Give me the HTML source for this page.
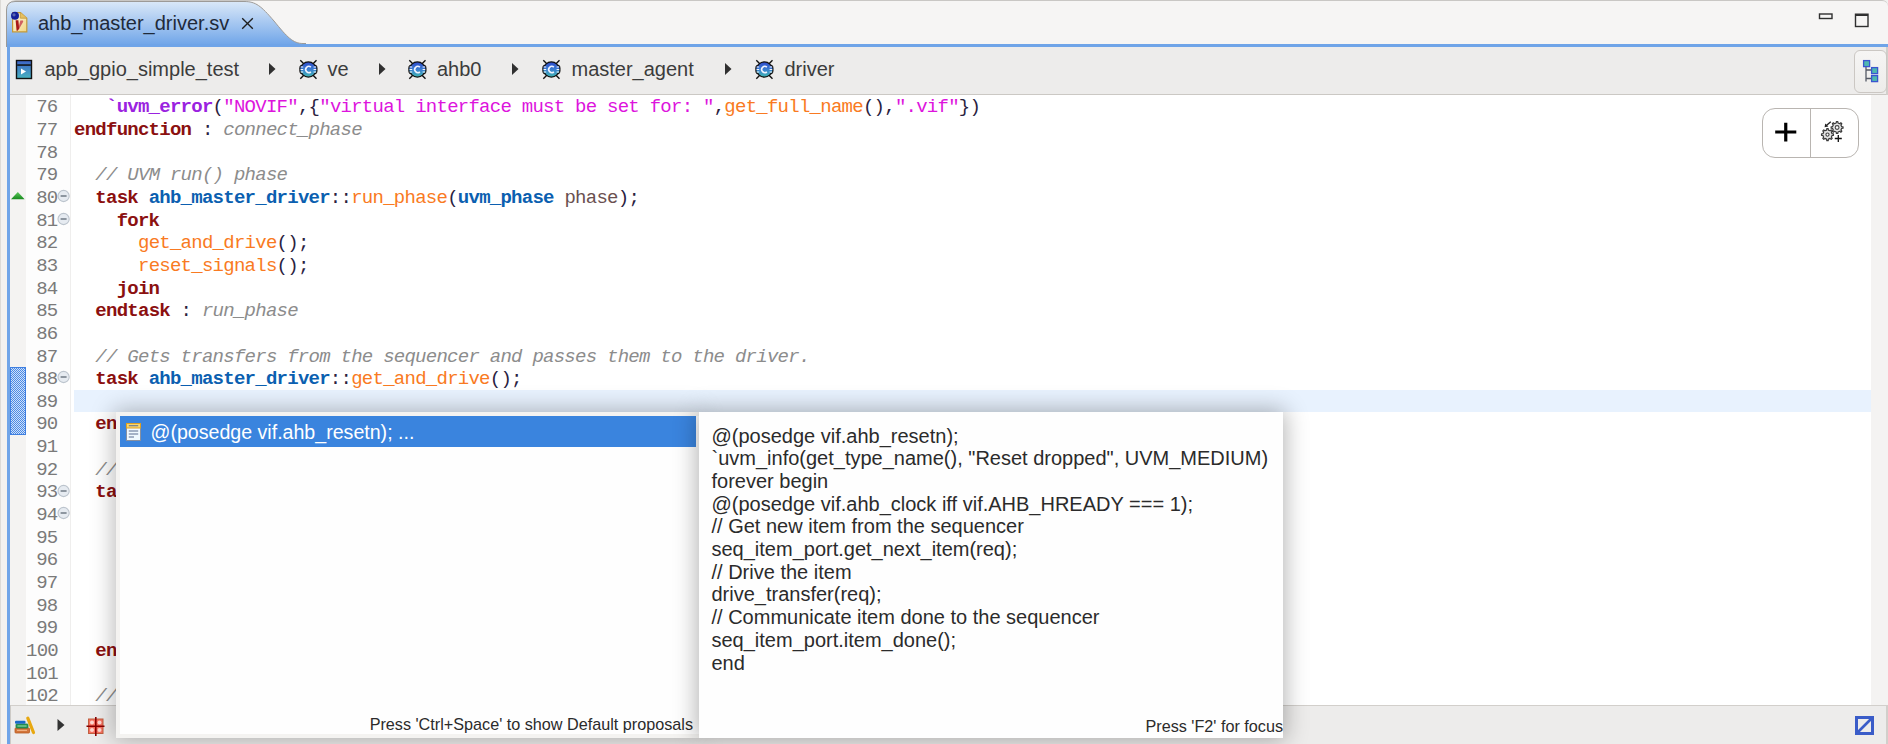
<!DOCTYPE html>
<html><head><meta charset="utf-8">
<style>
*{margin:0;padding:0;box-sizing:border-box}
html,body{width:1888px;height:744px;overflow:hidden;background:#f2f1f0;position:relative;font-family:"Liberation Sans",sans-serif}
.a{position:absolute}
#tabbar{left:6px;top:0;width:1882px;height:47px;background:#f6f5f4;border-top:1.5px solid #c9c7c4;border-top-right-radius:6px;border-top-left-radius:10px}
#bluel{left:6.5px;top:43.5px;width:1881.5px;height:3.5px;background:#6fa4e8}
#frameL{left:6.5px;top:44px;width:3px;height:700px;background:#6fa4e8}
#frameR{left:1886px;top:47px;width:2px;height:48px;background:#d2cfcb}
#frameR2{left:1886px;top:705px;width:2px;height:39px;background:#d2cfcb}
#outerline{left:0;top:0;width:1px;height:744px;background:#dcdad7}
#tabtxt{left:38px;top:12.5px;font-size:20px;line-height:20px;color:#1f2a3a;white-space:pre}
#crumb{left:9.5px;top:47px;width:1876.5px;height:48px;background:#edeceb;border-bottom:1px solid #cbc8c4}
.ct{font-size:20px;line-height:20px;color:#3c3c3c;white-space:pre;top:59px}
#ruler{left:9.5px;top:95px;width:16.5px;height:610px;background:#f4f3f2}
#lnum{left:26px;top:95px;width:45px;height:610px;background:#fdfdfd;border-right:1px solid #efeeed}
#code{left:71px;top:95px;width:1800px;height:610px;background:#fff}
#ovr{left:1871px;top:95px;width:17px;height:610px;background:#f4f3f2}
#curline{left:74px;top:389.7px;width:1797px;height:22px;background:#e8f2fe}
#bottom{left:9.5px;top:705px;width:1876.5px;height:39px;background:#edeceb;border-top:1px solid #d2cfcb}
.mono{font-family:"Liberation Mono",monospace;font-size:19px;letter-spacing:-0.742px;line-height:22.65px;white-space:pre}
#nums{left:26px;top:96.3px;width:31.5px;text-align:right;color:#7a7a7a}
#src{left:74px;top:96.3px;color:#2a2140}
.k{color:#8b1010;font-weight:bold}
.c{color:#0b5fb0;font-weight:bold}
.f{color:#f97a22}
.m{color:#9a22e0;font-weight:bold}
.s{color:#dd14dd}
.g{color:#8c8c8c;font-style:italic}
.p{color:#6a5050}
#pop1{left:116px;top:412px;width:583px;height:326px;background:#fefefe;border:4px solid #f4f3f1;border-right:0;box-shadow:0 0 22px 2px rgba(0,0,0,.28)}
#pop2{left:699px;top:412px;width:584px;height:326px;background:#fefefe;box-shadow:0 0 22px 2px rgba(0,0,0,.3)}
#sel{left:0;top:0;width:576px;height:31px;background:#3a84de}
#seltxt{left:30.5px;top:5.7px;font-size:19.6px;line-height:20px;color:#fff;white-space:pre}
#dtl{left:12.5px;top:12.5px;font-size:20px;line-height:22.7px;color:#2b2b2b;white-space:pre}
.foot{font-size:16.2px;line-height:16px;color:#2b2b2b;white-space:pre}
</style></head><body>
<div id="outerline" class="a"></div>
<div id="tabbar" class="a"></div>
<svg class="a" style="left:6px;top:0" width="300" height="47" viewBox="0 0 300 47">
<defs><linearGradient id="tg" x1="0" y1="0" x2="0" y2="1"><stop offset="0" stop-color="#dae8f8"/><stop offset="1" stop-color="#6ba2e8"/></linearGradient></defs>
<path d="M0.5 47 L0.5 10 Q0.5 1.5 9 1.5 L238 1.5 C250 1.5 255 6 268 21 C281 37 287 43.5 297 43.5 L300 43.5 L300 47 Z" fill="url(#tg)" stroke="#9c9a97" stroke-width="1"/>
</svg>
<div id="bluel" class="a"></div>
<div id="frameL" class="a"></div>
<div id="frameR" class="a"></div>
<div id="tabtxt" class="a">ahb_master_driver.sv</div>

<div id="crumb" class="a"></div>

<!-- tab file icon -->
<svg class="a" style="left:10px;top:10px" width="20" height="24" viewBox="0 0 20 24">
<defs><linearGradient id="pg" x1="0" y1="0" x2="1" y2="1"><stop offset="0" stop-color="#fffbe8"/><stop offset="1" stop-color="#f2d480"/></linearGradient></defs>
<path d="M2.6 2.6 L10.5 2.6 L16.8 8.2 L16.8 21.9 L2.6 21.9 Z" fill="url(#pg)" stroke="#c4993a" stroke-width="1.2"/>
<path d="M10.3 2.6 L10.3 8.2 L16.8 8.2" fill="#e6c060" stroke="#c4993a" stroke-width="0.8"/>
<path d="M5.6 10.2 L8.4 10.2 L9.2 18.8 L7.6 20.8 L6.6 20.8 Z" fill="#a81818"/>
<path d="M10.3 10.4 L13 10.4 L13.2 11.8 L9.2 18.8 L8.8 16.8 Z" fill="#d06060"/>
<circle cx="5" cy="5.8" r="4" fill="#14209a"/>
<circle cx="4" cy="4.8" r="1.6" fill="#5a68b0"/>
</svg>
<svg class="a" style="left:240px;top:16px" width="15" height="15" viewBox="0 0 15 15"><path d="M2.2 2.2 L12.8 12.8 M12.8 2.2 L2.2 12.8" stroke="#1e1e1e" stroke-width="1.35"/></svg>
<!-- min/max -->
<svg class="a" style="left:1816px;top:10px" width="56" height="20" viewBox="0 0 56 20">
<rect x="3.5" y="4" width="12.5" height="4.5" fill="none" stroke="#2f2f2f" stroke-width="1.4"/>
<rect x="39.5" y="4.2" width="12.5" height="12.3" fill="none" stroke="#2f2f2f" stroke-width="1.4"/>
<rect x="39.5" y="4.2" width="12.5" height="1.8" fill="#2f2f2f"/>
</svg>
<!-- breadcrumb icons -->
<svg class="a" style="left:15px;top:59px" width="19" height="21" viewBox="0 0 19 21">
<defs><linearGradient id="prg" x1="0" y1="0" x2="0" y2="1"><stop offset="0" stop-color="#3d63c8"/><stop offset="1" stop-color="#48b2c0"/></linearGradient></defs>
<rect x="1.5" y="1.5" width="15" height="18" fill="url(#prg)" stroke="#111" stroke-width="1.4"/>
<rect x="2.2" y="5.3" width="13.6" height="1.5" fill="#111"/>
<path d="M6 9.5 L11 12.5 L6 15.5 Z" fill="#fff"/>
</svg>
<svg class="a" style="left:298px;top:59px" width="21" height="21" viewBox="0 0 21 21">
<defs><linearGradient id="bg298" x1="0" y1="0" x2="0" y2="1"><stop offset="0" stop-color="#2e4ccc"/><stop offset=".5" stop-color="#3a7ed0"/><stop offset="1" stop-color="#3fb2b4"/></linearGradient></defs>
<path d="M2.3 1.3 L6 5 M18.5 1.3 L14.8 5 M2.3 19.7 L6 16 M18.5 19.7 L14.8 16" stroke="#111" stroke-width="1.4"/>
<rect x="1.3" y="5.6" width="18.2" height="9.8" rx="3.6" fill="#111"/>
<circle cx="10.4" cy="10.5" r="8.3" fill="#111"/>
<rect x="2.5" y="6.8" width="15.8" height="7.4" rx="2.4" fill="url(#bg298)"/>
<circle cx="10.4" cy="10.5" r="7" fill="url(#bg298)"/>
<path d="M2.6 8 H5.2 M2.6 10.5 H5.2 M2.6 13 H5.2 M15.6 8 H18.2 M15.6 10.5 H18.2 M15.6 13 H18.2" stroke="#f4f7ff" stroke-width="1.1"/>
<path d="M12.9 8.2 A3.1 3.1 0 1 0 12.9 12.8" fill="none" stroke="#eef2ff" stroke-width="1.6"/>
</svg>
<svg class="a" style="left:407px;top:59px" width="21" height="21" viewBox="0 0 21 21">
<defs><linearGradient id="bg407" x1="0" y1="0" x2="0" y2="1"><stop offset="0" stop-color="#2e4ccc"/><stop offset=".5" stop-color="#3a7ed0"/><stop offset="1" stop-color="#3fb2b4"/></linearGradient></defs>
<path d="M2.3 1.3 L6 5 M18.5 1.3 L14.8 5 M2.3 19.7 L6 16 M18.5 19.7 L14.8 16" stroke="#111" stroke-width="1.4"/>
<rect x="1.3" y="5.6" width="18.2" height="9.8" rx="3.6" fill="#111"/>
<circle cx="10.4" cy="10.5" r="8.3" fill="#111"/>
<rect x="2.5" y="6.8" width="15.8" height="7.4" rx="2.4" fill="url(#bg407)"/>
<circle cx="10.4" cy="10.5" r="7" fill="url(#bg407)"/>
<path d="M2.6 8 H5.2 M2.6 10.5 H5.2 M2.6 13 H5.2 M15.6 8 H18.2 M15.6 10.5 H18.2 M15.6 13 H18.2" stroke="#f4f7ff" stroke-width="1.1"/>
<path d="M12.9 8.2 A3.1 3.1 0 1 0 12.9 12.8" fill="none" stroke="#eef2ff" stroke-width="1.6"/>
</svg>
<svg class="a" style="left:541px;top:59px" width="21" height="21" viewBox="0 0 21 21">
<defs><linearGradient id="bg541" x1="0" y1="0" x2="0" y2="1"><stop offset="0" stop-color="#2e4ccc"/><stop offset=".5" stop-color="#3a7ed0"/><stop offset="1" stop-color="#3fb2b4"/></linearGradient></defs>
<path d="M2.3 1.3 L6 5 M18.5 1.3 L14.8 5 M2.3 19.7 L6 16 M18.5 19.7 L14.8 16" stroke="#111" stroke-width="1.4"/>
<rect x="1.3" y="5.6" width="18.2" height="9.8" rx="3.6" fill="#111"/>
<circle cx="10.4" cy="10.5" r="8.3" fill="#111"/>
<rect x="2.5" y="6.8" width="15.8" height="7.4" rx="2.4" fill="url(#bg541)"/>
<circle cx="10.4" cy="10.5" r="7" fill="url(#bg541)"/>
<path d="M2.6 8 H5.2 M2.6 10.5 H5.2 M2.6 13 H5.2 M15.6 8 H18.2 M15.6 10.5 H18.2 M15.6 13 H18.2" stroke="#f4f7ff" stroke-width="1.1"/>
<path d="M12.9 8.2 A3.1 3.1 0 1 0 12.9 12.8" fill="none" stroke="#eef2ff" stroke-width="1.6"/>
</svg>
<svg class="a" style="left:754px;top:59px" width="21" height="21" viewBox="0 0 21 21">
<defs><linearGradient id="bg754" x1="0" y1="0" x2="0" y2="1"><stop offset="0" stop-color="#2e4ccc"/><stop offset=".5" stop-color="#3a7ed0"/><stop offset="1" stop-color="#3fb2b4"/></linearGradient></defs>
<path d="M2.3 1.3 L6 5 M18.5 1.3 L14.8 5 M2.3 19.7 L6 16 M18.5 19.7 L14.8 16" stroke="#111" stroke-width="1.4"/>
<rect x="1.3" y="5.6" width="18.2" height="9.8" rx="3.6" fill="#111"/>
<circle cx="10.4" cy="10.5" r="8.3" fill="#111"/>
<rect x="2.5" y="6.8" width="15.8" height="7.4" rx="2.4" fill="url(#bg754)"/>
<circle cx="10.4" cy="10.5" r="7" fill="url(#bg754)"/>
<path d="M2.6 8 H5.2 M2.6 10.5 H5.2 M2.6 13 H5.2 M15.6 8 H18.2 M15.6 10.5 H18.2 M15.6 13 H18.2" stroke="#f4f7ff" stroke-width="1.1"/>
<path d="M12.9 8.2 A3.1 3.1 0 1 0 12.9 12.8" fill="none" stroke="#eef2ff" stroke-width="1.6"/>
</svg>
<svg class="a" style="left:268px;top:62px" width="9" height="14" viewBox="0 0 9 14"><path d="M1 1 L7.5 7 L1 13 Z" fill="#303030"/></svg>
<svg class="a" style="left:377.5px;top:62px" width="9" height="14" viewBox="0 0 9 14"><path d="M1 1 L7.5 7 L1 13 Z" fill="#303030"/></svg>
<svg class="a" style="left:511px;top:62px" width="9" height="14" viewBox="0 0 9 14"><path d="M1 1 L7.5 7 L1 13 Z" fill="#303030"/></svg>
<svg class="a" style="left:724px;top:62px" width="9" height="14" viewBox="0 0 9 14"><path d="M1 1 L7.5 7 L1 13 Z" fill="#303030"/></svg>

<!-- tree button -->
<div class="a" style="left:1853.5px;top:49.5px;width:33px;height:43px;border:1px solid #cbc7c3;border-radius:6px;background:linear-gradient(#f6f5f4,#edecea)"></div>
<svg class="a" style="left:1860px;top:58px" width="22" height="26" viewBox="0 0 22 26">
<path d="M6 8 V23.5 M6 12 H11 M6 20.5 H11" stroke="#555a66" stroke-width="1.3" fill="none"/>
<rect x="3.6" y="2.6" width="6" height="6" fill="#4fb8b0" stroke="#3a55d0" stroke-width="1.3"/>
<rect x="11.6" y="9.6" width="6" height="6" fill="#4fb8b0" stroke="#3a55d0" stroke-width="1.3"/>
<rect x="11.6" y="17.6" width="6" height="6" fill="#4fb8b0" stroke="#3a55d0" stroke-width="1.3"/>
</svg>

<div class="a ct" style="left:44.5px">apb_gpio_simple_test</div>
<div class="a ct" style="left:327.5px">ve</div>
<div class="a ct" style="left:437px">ahb0</div>
<div class="a ct" style="left:571.5px">master_agent</div>
<div class="a ct" style="left:784.5px">driver</div>

<div id="ruler" class="a"></div>
<div id="lnum" class="a"></div>
<div id="code" class="a"></div>
<div id="ovr" class="a"></div>
<div id="curline" class="a"></div>
<div id="bottom" class="a"></div>
<div id="frameR2" class="a"></div>
<div class="a" style="left:9.5px;top:705px;width:1.5px;height:39px;background:#cdcac6"></div>

<svg class="a" style="left:56px;top:189.05px" width="15" height="14" viewBox="0 0 15 14"><circle cx="7.6" cy="7" r="5.6" fill="#e6ebf1" stroke="#bcc4cd" stroke-width="1.1"/><path d="M4.6 7 H10.6" stroke="#5e6874" stroke-width="1.3"/></svg>
<svg class="a" style="left:56px;top:211.70px" width="15" height="14" viewBox="0 0 15 14"><circle cx="7.6" cy="7" r="5.6" fill="#e6ebf1" stroke="#bcc4cd" stroke-width="1.1"/><path d="M4.6 7 H10.6" stroke="#5e6874" stroke-width="1.3"/></svg>
<svg class="a" style="left:56px;top:370.25px" width="15" height="14" viewBox="0 0 15 14"><circle cx="7.6" cy="7" r="5.6" fill="#e6ebf1" stroke="#bcc4cd" stroke-width="1.1"/><path d="M4.6 7 H10.6" stroke="#5e6874" stroke-width="1.3"/></svg>
<svg class="a" style="left:56px;top:483.50px" width="15" height="14" viewBox="0 0 15 14"><circle cx="7.6" cy="7" r="5.6" fill="#e6ebf1" stroke="#bcc4cd" stroke-width="1.1"/><path d="M4.6 7 H10.6" stroke="#5e6874" stroke-width="1.3"/></svg>
<svg class="a" style="left:56px;top:506.15px" width="15" height="14" viewBox="0 0 15 14"><circle cx="7.6" cy="7" r="5.6" fill="#e6ebf1" stroke="#bcc4cd" stroke-width="1.1"/><path d="M4.6 7 H10.6" stroke="#5e6874" stroke-width="1.3"/></svg>
<svg class="a" style="left:10px;top:190px" width="16" height="11" viewBox="0 0 16 11"><defs><linearGradient id="gt" x1="0" y1="0" x2="0" y2="1"><stop offset="0" stop-color="#5cc85c"/><stop offset="1" stop-color="#178a1e"/></linearGradient></defs><path d="M1 9.3 L7.8 2 L14.6 9.3 Z" fill="url(#gt)"/></svg>
<div class="a" style="left:10px;top:367px;width:16px;height:68px;background-color:#fff;background-image:repeating-conic-gradient(#4a8ae6 0 25%, #cfe0f8 0 50%);background-size:2px 2px;border:1px solid #3f7fe0"></div>
<div class="a" style="left:1762px;top:108px;width:97px;height:49.5px;border:1.5px solid #b9b5b1;border-radius:13px;background:#fff"></div>
<div class="a" style="left:1809.8px;top:109px;width:1.5px;height:47.5px;background:#b9b5b1"></div>
<svg class="a" style="left:1772px;top:120px" width="28" height="24" viewBox="0 0 28 24"><path d="M3.2 12 H24.3 M13.75 2.7 V21.5" stroke="#000" stroke-width="3.2"/></svg>
<svg class="a" style="left:1818px;top:116px" width="28" height="30" viewBox="0 0 28 30">
<path d="M18.20 6.99 L18.39 5.54 L19.81 5.54 L20.00 6.99 L21.66 7.68 L22.81 6.79 L23.81 7.79 L22.92 8.94 L23.61 10.60 L25.06 10.79 L25.06 12.21 L23.61 12.40 L22.92 14.06 L23.81 15.21 L22.81 16.21 L21.66 15.32 L20.00 16.01 L19.81 17.46 L18.39 17.46 L18.20 16.01 L16.54 15.32 L15.39 16.21 L14.39 15.21 L15.28 14.06 L14.59 12.40 L13.14 12.21 L13.14 10.79 L14.59 10.60 L15.28 8.94 L14.39 7.79 L15.39 6.79 L16.54 7.68 Z" fill="#e4e4e4" stroke="#3a3a3a" stroke-width="1.2" stroke-linejoin="round"/>
<circle cx="19.1" cy="11.5" r="1.9" fill="#fff" stroke="#444" stroke-width="1.1"/>
<path d="M8.60 14.09 L8.79 12.64 L10.21 12.64 L10.40 14.09 L12.06 14.78 L13.21 13.89 L14.21 14.89 L13.32 16.04 L14.01 17.70 L15.46 17.89 L15.46 19.31 L14.01 19.50 L13.32 21.16 L14.21 22.31 L13.21 23.31 L12.06 22.42 L10.40 23.11 L10.21 24.56 L8.79 24.56 L8.60 23.11 L6.94 22.42 L5.79 23.31 L4.79 22.31 L5.68 21.16 L4.99 19.50 L3.54 19.31 L3.54 17.89 L4.99 17.70 L5.68 16.04 L4.79 14.89 L5.79 13.89 L6.94 14.78 Z" fill="#e4e4e4" stroke="#3a3a3a" stroke-width="1.2" stroke-linejoin="round"/>
<circle cx="9.5" cy="18.6" r="1.6" fill="#fff" stroke="#444" stroke-width="1.1"/>
<path d="M12.8 5.8 L8.6 9.2" stroke="#222" stroke-width="1.4"/><path d="M6.6 11.2 L7.2 7.4 L10.4 10.4 Z" fill="#222"/>
<path d="M16.8 22.5 H23.8 M20.3 19 V26" stroke="#111" stroke-width="1.3"/>
</svg>
<svg class="a" style="left:14px;top:716px" width="22" height="19" viewBox="0 0 22 19">
<rect x="1" y="12" width="14.5" height="5" rx="0.8" fill="#d2753a" stroke="#b85a20" stroke-width="0.8"/><rect x="3" y="13.8" width="10" height="1.2" fill="#f0b080"/>
<rect x="2" y="8" width="12" height="4" rx="0.8" fill="#2a9a5a" stroke="#1a7a40" stroke-width="0.8"/><rect x="3.5" y="9.5" width="9" height="1" fill="#9ad8a8"/>
<rect x="1" y="4.8" width="10.5" height="3" rx="1" fill="#1a6ac8"/>
<path d="M13.8 2.2 L19.5 16.5" stroke="#e8a810" stroke-width="3.2" stroke-linecap="round"/>
</svg>
<svg class="a" style="left:56px;top:718px" width="10" height="14" viewBox="0 0 10 14"><path d="M1.5 1 L8.5 7 L1.5 13 Z" fill="#333"/></svg>
<svg class="a" style="left:86px;top:716px" width="20" height="21" viewBox="0 0 20 21">
<defs><radialGradient id="rg"><stop offset="0" stop-color="#fff"/><stop offset="1" stop-color="#ff7050"/></radialGradient></defs>
<rect x="2.5" y="3" width="14.5" height="14.5" fill="#f87060" stroke="#c06040" stroke-width="1"/>
<circle cx="6" cy="6.5" r="2" fill="#ffd8d0"/><circle cx="13.5" cy="6.5" r="2" fill="#ffd8d0"/><circle cx="6" cy="14" r="2" fill="#ffd8d0"/><circle cx="13.5" cy="14" r="2" fill="#ffd8d0"/>
<path d="M0.5 10.3 H18.5 M9.8 1 V20" stroke="#8a0000" stroke-width="1.6"/>
</svg>
<svg class="a" style="left:1854px;top:715px" width="21" height="21" viewBox="0 0 21 21"><rect x="2.5" y="2.5" width="16" height="16" fill="none" stroke="#3a5cc8" stroke-width="3"/><path d="M4 17 L17 4" stroke="#3a5cc8" stroke-width="2.6"/></svg>
<div id="nums" class="a mono">76
77
78
79
80
81
82
83
84
85
86
87
88
89
90
91
92
93
94
95
96
97
98
99
100
101
102</div>
<div id="src" class="a mono">   <span class="m">`uvm_error</span>(<span class="s">"NOVIF"</span>,{<span class="s">"virtual interface must be set for: "</span>,<span class="f">get_full_name</span>(),<span class="s">".vif"</span>})
<span class="k">endfunction</span> : <span class="g">connect_phase</span>

  <span class="g">// UVM run() phase</span>
  <span class="k">task</span> <span class="c">ahb_master_driver</span>::<span class="f">run_phase</span>(<span class="c">uvm_phase</span> <span class="p">phase</span>);
    <span class="k">fork</span>
      <span class="f">get_and_drive</span>();
      <span class="f">reset_signals</span>();
    <span class="k">join</span>
  <span class="k">endtask</span> : <span class="g">run_phase</span>

  <span class="g">// Gets transfers from the sequencer and passes them to the driver.</span>
  <span class="k">task</span> <span class="c">ahb_master_driver</span>::<span class="f">get_and_drive</span>();

  <span class="k">endtask</span>

  <span class="g">// comment</span>
  <span class="k">task</span>






  <span class="k">endtask</span>

  <span class="g">// comment</span></div>

<div id="pop1" class="a">
  <div id="sel" class="a"></div>
  <svg class="a" style="left:5px;top:6px" width="17" height="20" viewBox="0 0 17 20">
<rect x="1.5" y="1.5" width="14" height="17" fill="#f0f8ff" stroke="#8890a0" stroke-width="1"/>
<rect x="1.5" y="1.5" width="14" height="4.5" fill="#f8d870" stroke="#e0a020" stroke-width="1"/>
<path d="M3.8 3.8 H13.2 M3.8 9 H13.2 M3.8 12 H13.2 M3.8 15 H9" stroke="#5a6a90" stroke-width="1.1"/>
</svg>
<div id="seltxt" class="a">@(posedge vif.ahb_resetn); ...</div>
  <div class="a foot" style="right:6px;top:300px">Press 'Ctrl+Space' to show Default proposals</div>
</div>
<div id="pop2" class="a">
  <div id="dtl" class="a">@(posedge vif.ahb_resetn);
`uvm_info(get_type_name(), "Reset dropped", UVM_MEDIUM)
forever begin
@(posedge vif.ahb_clock iff vif.AHB_HREADY === 1);
// Get new item from the sequencer
seq_item_port.get_next_item(req);
// Drive the item
drive_transfer(req);
// Communicate item done to the sequencer
seq_item_port.item_done();
end</div>
  <div class="a foot" style="right:0px;top:306px">Press 'F2' for focus</div>
</div>
</body></html>
